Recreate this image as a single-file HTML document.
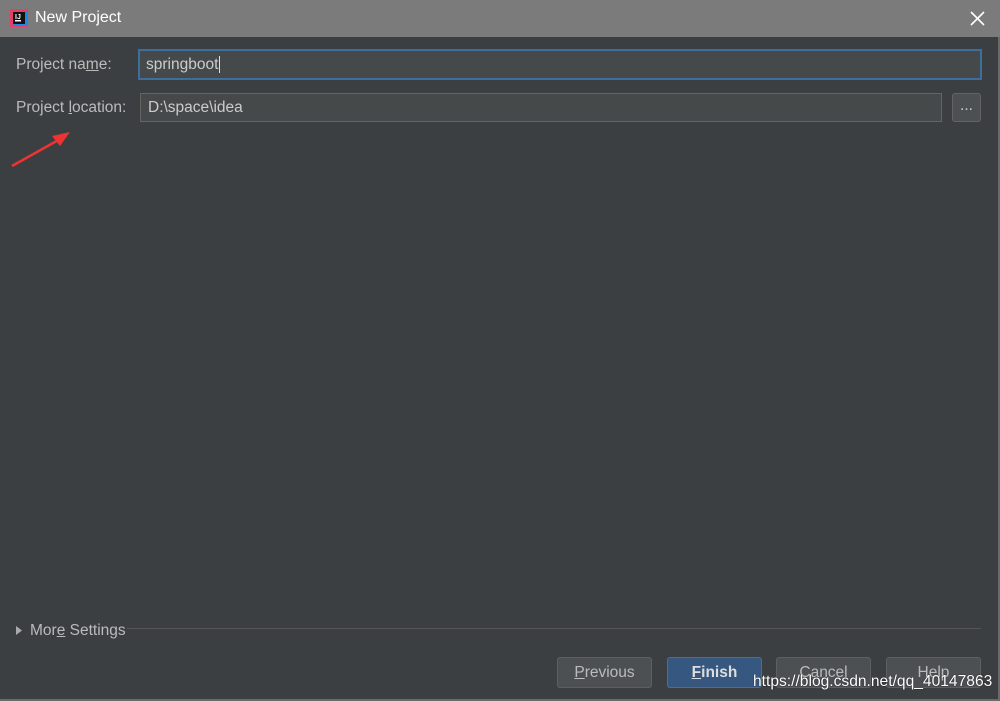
<!DOCTYPE html><html><head><style>
body{margin:0;width:1000px;height:701px;background:#3c3f41;font-family:"Liberation Sans",sans-serif;position:relative;overflow:hidden;color:#bbbbbb;font-size:15px}
.tb{position:absolute;left:0;top:0;width:1000px;height:37px;background:#7b7b7b}
.tb .t{position:absolute;left:35px;top:9px;color:#fff;font-size:16px}
.ab{position:absolute}
.lbl{position:absolute;font-size:15.5px;color:#bbb}
.fld{position:absolute;background:#45494a;border:1px solid #646464;box-sizing:border-box;color:#ccc;padding-left:7px;font-size:15.5px}
.btn{position:absolute;top:657px;width:95px;height:31px;border:1px solid #5e6060;border-radius:3px;box-sizing:border-box;background:#4c5052;text-align:center;line-height:29px;font-size:15.5px;color:#bbb}
</style></head><body>
<div class="tb"><svg class="ab" style="left:10px;top:9px" width="18" height="18"><rect x="0" y="0" width="18" height="18" fill="#e0406a"/><rect x="4" y="2" width="14" height="14" fill="#1e88e5"/><rect x="3" y="3" width="12" height="12" fill="#111"/><rect x="5" y="11" width="6" height="1.5" fill="#fff"/><text x="5" y="10" fill="#fff" font-size="7" font-family="Liberation Sans" font-weight="bold">IJ</text></svg><div class="t">New Project</div>
<svg class="ab" style="left:970px;top:11px" width="15" height="15"><path d="M1 1L14 14M14 1L1 14" stroke="#fff" stroke-width="1.6"/></svg></div>
<div class="ab" style="left:998px;top:37px;width:2px;height:664px;background:#6a6a6a"></div>
<div class="ab" style="left:0;top:699px;width:1000px;height:2px;background:#6a6a6a"></div>
<div class="lbl" style="left:16px;top:56px">Project na<u>m</u>e:</div>
<div class="fld" style="left:138px;top:49px;width:844px;height:31px;border:2px solid #3d6e9e;line-height:27px;padding-left:6px">springboot<span style="border-left:1px solid #ddd;margin-left:1px"></span></div>
<div class="lbl" style="left:16px;top:99px">Project <u>l</u>ocation:</div>
<div class="fld" style="left:140px;top:93px;width:802px;height:29px;line-height:27px">D:\space\idea</div>
<div class="fld" style="left:952px;top:93px;width:29px;height:29px;border-radius:3px;background:#4c5052;padding:0;text-align:center;line-height:24px">...</div>
<svg class="ab" style="left:8px;top:128px" width="66" height="42"><path d="M4 38L54 10" stroke="#e33" stroke-width="2.5"/><path d="M62 4L44 8L52 18Z" fill="#e33"/></svg>
<svg class="ab" style="left:16px;top:626px" width="8" height="10"><path d="M0 0L6 4.5L0 9Z" fill="#aaa"/></svg>
<div class="lbl" style="left:30px;top:622px">Mor<u>e</u> Settings</div>
<div class="ab" style="left:127px;top:628px;width:854px;height:1px;background:#555"></div>
<div class="btn" style="left:557px"><u>P</u>revious</div>
<div class="btn" style="left:667px;background:#365880;border-color:#4c708c;color:#ddd;font-weight:bold"><u>F</u>inish</div>
<div class="btn" style="left:776px">Cancel</div>
<div class="btn" style="left:886px">Help</div>
<div class="ab" style="left:753px;top:673px;font-size:15.6px;color:#fff;text-shadow:0 0 1px #000">https://blog.csdn.net/qq_40147863</div>
</body></html>
